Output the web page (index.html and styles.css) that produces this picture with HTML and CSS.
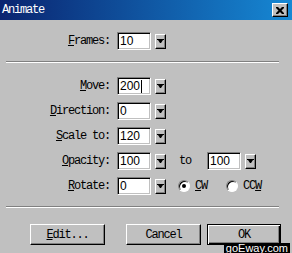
FILE: index.html
```html
<!DOCTYPE html>
<html lang="en">
<head>
  <meta charset="UTF-8">
  <title>Animate</title>
  <link rel="stylesheet" href="styles.css">
</head>
<body>

  <div class="dialog">
    <div class="titlebar">
      <span class="title">Animate</span>
      <span class="close">
        <svg width="8" height="7" viewBox="0 0 8 7"><path d="M0 0h2l2 2 2-2h2v1l-2.5 2.5L8 6v1H6L4 5 2 7H0V6l2.5-2.5L0 1z" fill="#000"/></svg>
      </span>
    </div>

    <div class="section top">
      <div class="row">
        <label class="lbl"><u>F</u>rames:</label>
        <div class="field">10</div>
        <span class="drop"><svg width="7" height="4" viewBox="0 0 7 4"><path d="M0 0h7v1h-1l-2 3h-1l-2-3h-1z" fill="#000"/></svg></span>
      </div>
    </div>

    <div class="sep"></div>

    <div class="section rows">
      <div class="row">
        <label class="lbl"><u>M</u>ove:</label>
        <div class="field">200<span class="caret"></span></div>
        <span class="drop"><svg width="7" height="4" viewBox="0 0 7 4"><path d="M0 0h7v1h-1l-2 3h-1l-2-3h-1z" fill="#000"/></svg></span>
      </div>
      <div class="row">
        <label class="lbl"><u>D</u>irection:</label>
        <div class="field">0</div>
        <span class="drop"><svg width="7" height="4" viewBox="0 0 7 4"><path d="M0 0h7v1h-1l-2 3h-1l-2-3h-1z" fill="#000"/></svg></span>
      </div>
      <div class="row">
        <label class="lbl"><u>S</u>cale to:</label>
        <div class="field">120</div>
        <span class="drop"><svg width="7" height="4" viewBox="0 0 7 4"><path d="M0 0h7v1h-1l-2 3h-1l-2-3h-1z" fill="#000"/></svg></span>
      </div>
      <div class="row">
        <label class="lbl"><u>O</u>pacity:</label>
        <div class="field">100</div>
        <span class="drop"><svg width="7" height="4" viewBox="0 0 7 4"><path d="M0 0h7v1h-1l-2 3h-1l-2-3h-1z" fill="#000"/></svg></span>
        <span class="to">to</span>
        <div class="field">100</div>
        <span class="drop"><svg width="7" height="4" viewBox="0 0 7 4"><path d="M0 0h7v1h-1l-2 3h-1l-2-3h-1z" fill="#000"/></svg></span>
      </div>
      <div class="row">
        <label class="lbl"><u>R</u>otate:</label>
        <div class="field">0</div>
        <span class="drop"><svg width="7" height="4" viewBox="0 0 7 4"><path d="M0 0h7v1h-1l-2 3h-1l-2-3h-1z" fill="#000"/></svg></span>
        <span class="radio first checked"></span>
        <span class="radio-text"><u>C</u>W</span>
        <span class="radio"></span>
        <span class="radio-text">CC<u>W</u></span>
      </div>
    </div>

    <div class="sep"></div>

    <div class="buttons">
      <span class="btn btn-edit"><u>E</u>dit...</span>
      <span class="btn btn-cancel">Cancel</span>
      <span class="btn btn-ok">OK</span>
    </div>

    <div class="watermark">goEway.com</div>
  </div>

</body>
</html>
```

FILE: styles.css
```css
body {
  margin: 0;
  font-family: "Liberation Mono", monospace;
  font-size: 12px;
  letter-spacing: -1.2px;
  color: #000;
}

.dialog {
  position: relative;
  width: 292px;
  height: 253px;
  background: #c0c0c0;
  overflow: hidden;
}

.titlebar {
  height: 20px;
  display: flex;
  align-items: center;
  justify-content: space-between;
  padding: 0 4px 0 2px;
  background: linear-gradient(to right, #0a2470, #1688d4);
}

.title {
  color: #fff;
}

.close {
  width: 16px;
  height: 14px;
  box-sizing: border-box;
  display: flex;
  align-items: center;
  justify-content: center;
  background: #c0c0c0;
  border: 1px solid;
  border-color: #fff #000 #000 #fff;
  box-shadow: inset -1px -1px #808080;
}

.section.top {
  padding-top: 12px;
}

.rows {
  display: flex;
  flex-direction: column;
  gap: 7px;
}

.row {
  display: flex;
  align-items: center;
  height: 18px;
}

.lbl {
  width: 110px;
  margin-right: 7px;
  text-align: right;
}

.field {
  width: 34px;
  height: 18px;
  box-sizing: border-box;
  padding: 2px 0 0 2px;
  background: #fff;
  border: 1px solid;
  border-color: #808080 #fff #fff #808080;
  box-shadow: inset 1px 1px #000, inset -1px -1px #c0c0c0;
  font-family: "Liberation Sans", sans-serif;
  font-size: 12px;
  letter-spacing: 0;
  line-height: 13px;
  display: flex;
  align-items: flex-start;
}

.caret {
  width: 1px;
  height: 13px;
  margin-left: 1px;
  background: #000;
}

.drop {
  width: 11px;
  height: 15px;
  margin-left: 4px;
  box-sizing: border-box;
  display: flex;
  align-items: center;
  justify-content: center;
  background: #c0c0c0;
  border: 1px solid;
  border-color: #fff #000 #000 #fff;
  box-shadow: inset -1px -1px #808080;
}

.to {
  margin: 0 16px 0 13px;
}

.radio {
  position: relative;
  width: 12px;
  height: 12px;
  box-sizing: border-box;
  margin-left: 19px;
  border-radius: 50%;
  background: #fff;
  border: 1px solid;
  border-color: #808080 #fff #fff #808080;
  box-shadow: inset 1px 1px #000;
}

.radio.first {
  margin-left: 12px;
}

.radio.checked::after {
  content: "";
  position: absolute;
  left: 3px;
  top: 3px;
  width: 4px;
  height: 4px;
  border-radius: 50%;
  background: #000;
}

.radio-text {
  margin-left: 5px;
}

.sep {
  margin: 11px 13px 0 6px;
  height: 0;
  border-top: 1px solid #808080;
  border-bottom: 1px solid #fff;
}

.sep + .rows {
  padding-top: 14px;
}

.buttons {
  display: flex;
  padding: 16px 0 0 30px;
}

.btn {
  width: 75px;
  height: 21px;
  box-sizing: border-box;
  display: flex;
  align-items: center;
  justify-content: center;
  background: #c0c0c0;
  border: 1px solid;
  border-color: #fff #000 #000 #fff;
  box-shadow: inset -1px -1px #808080;
}

.btn-cancel {
  margin-left: 21px;
}

.btn-ok {
  margin-left: 6px;
  width: 74px;
  border: 1px solid #000;
  box-shadow: inset 1px 1px #fff, inset -1px -1px #000, inset -2px -2px #808080;
}

.watermark {
  position: absolute;
  right: 2px;
  bottom: 0;
  height: 10px;
  padding: 0 2px;
  background: #000;
  color: #fff;
  font-family: "Liberation Sans", sans-serif;
  font-size: 11px;
  letter-spacing: 0;
  line-height: 11px;
}
```
